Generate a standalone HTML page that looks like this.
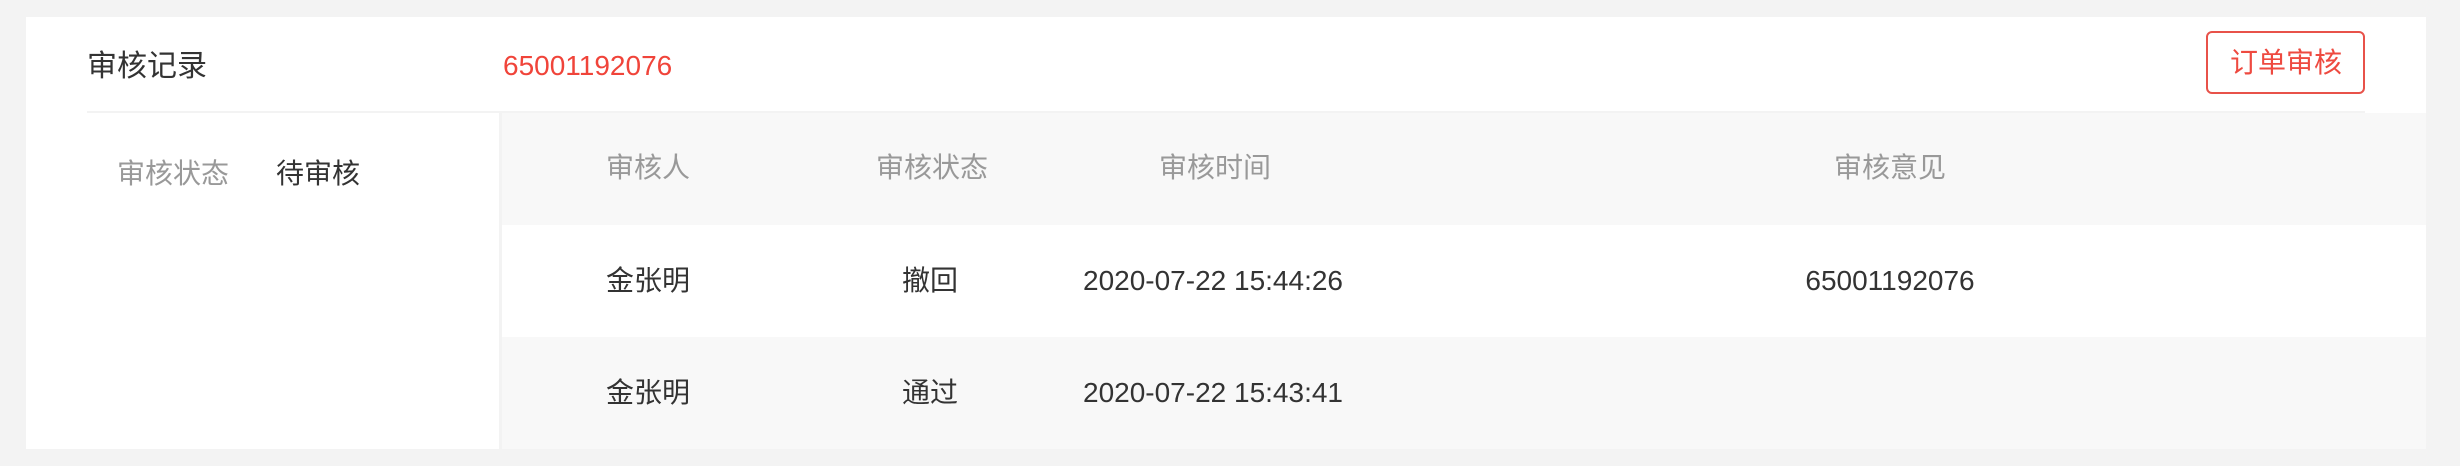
<!DOCTYPE html>
<html><head><meta charset="utf-8"><style>
*{margin:0;padding:0;box-sizing:border-box}
body{width:2460px;height:466px;background:#f3f3f3;position:relative;overflow:hidden;font-family:"Liberation Sans","Noto Sans CJK SC",sans-serif}
.card{position:absolute;left:26px;top:17px;width:2400px;height:432px;background:#fff}
.t{position:absolute;white-space:nowrap;line-height:1}
.c{transform:translateX(-50%)}
.g{color:#999}.d{color:#333}
.f28{font-size:28px}
</style></head><body>
<div class="card"></div>
<div class="t d" style="left:87px;top:52px;font-size:30px">审核记录</div>
<div class="t f28" style="left:503px;top:52px;color:#f0443a">65001192076</div>
<div style="position:absolute;left:2206px;top:31px;width:159px;height:63px;border:2px solid #e8524a;border-radius:6px"></div>
<div class="t f28" style="left:2230px;top:49px;color:#ee4a40">订单审核</div>
<div style="position:absolute;left:87px;top:111px;width:2278px;height:2px;background:#f3f3f3"></div>
<div style="position:absolute;left:499px;top:113px;width:3px;height:336px;background:#f3f3f3"></div>
<div style="position:absolute;left:502px;top:113px;width:1924px;height:112px;background:#f8f8f8"></div>
<div style="position:absolute;left:502px;top:337px;width:1924px;height:112px;background:#f8f8f8"></div>
<div class="t g f28" style="left:117px;top:160px">审核状态</div>
<div class="t d f28" style="left:276px;top:160px">待审核</div>
<div class="t g f28" style="left:606px;top:154px">审核人</div>
<div class="t g f28 c" style="left:932px;top:154px">审核状态</div>
<div class="t g f28 c" style="left:1215px;top:154px">审核时间</div>
<div class="t g f28 c" style="left:1890px;top:154px">审核意见</div>
<div class="t d f28" style="left:606px;top:267px">金张明</div>
<div class="t d f28 c" style="left:930px;top:267px">撤回</div>
<div class="t d f28" style="left:1083px;top:267px">2020-07-22 15:44:26</div>
<div class="t d f28 c" style="left:1890px;top:267px">65001192076</div>
<div class="t d f28" style="left:606px;top:379px">金张明</div>
<div class="t d f28 c" style="left:930px;top:379px">通过</div>
<div class="t d f28" style="left:1083px;top:379px">2020-07-22 15:43:41</div>
</body></html>
